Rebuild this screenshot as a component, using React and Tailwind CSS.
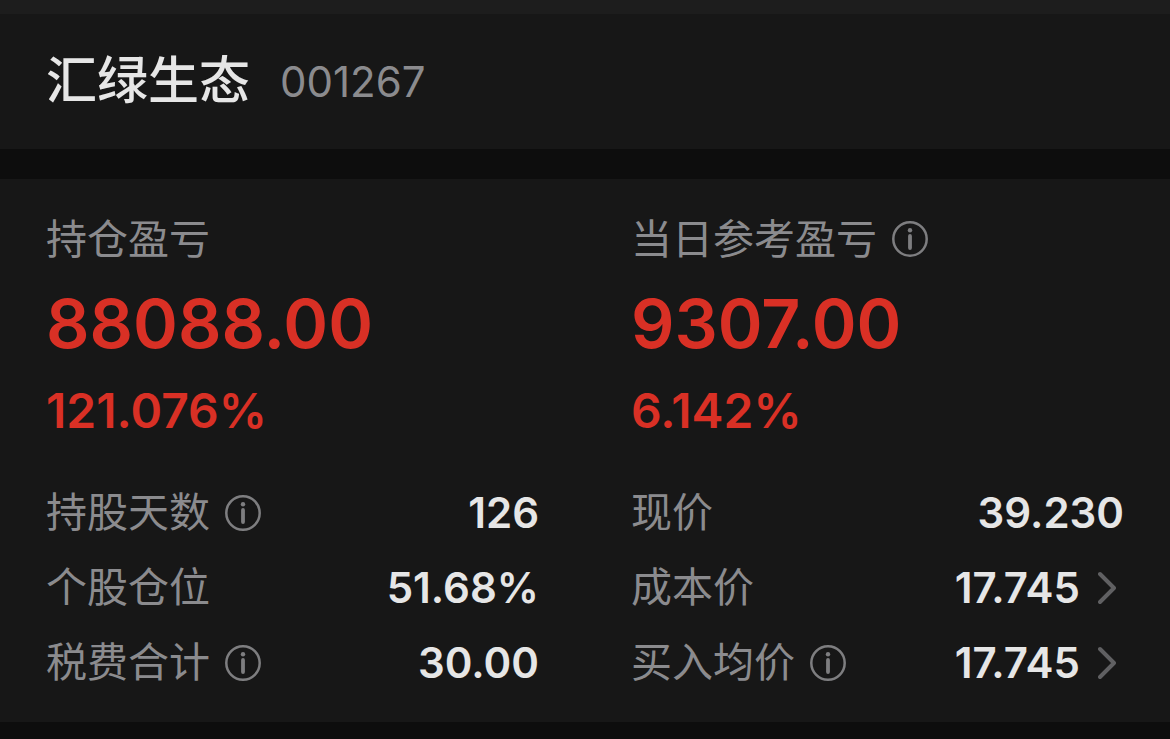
function InfoIcon() {
  return (
    <svg viewBox="0 0 36 36" className="size-9 shrink-0" fill="none" stroke="currentColor" aria-hidden="true">
      <circle cx="18" cy="18" r="16.7" strokeWidth="2.5" />
      <circle cx="18" cy="9.2" r="2.2" fill="currentColor" stroke="none" />
      <path d="M18 15V27" strokeWidth="3.8" strokeLinecap="round" />
    </svg>
  );
}

function Label({ text, info }) {
  return (
    <div className="flex items-center gap-[15px] whitespace-nowrap text-[#8b8b8e]">
      <span>{text}</span>
      {info && (
        <button type="button" aria-label={text + "说明"} className="text-[#7e7e80]">
          <InfoIcon />
        </button>
      )}
    </div>
  );
}

function Summary({ label, info, amount, percent }) {
  return (
    <div className="text-[#d93025]">
      <div className="text-[41px] leading-[60px]">
        <Label text={label} info={info} />
      </div>
      <div className="mt-4 text-[68px] leading-[76px] font-semibold">{amount}</div>
      <div className="mt-5 text-[48px] leading-[60px] font-semibold">{percent}</div>
    </div>
  );
}

function Row({ label, info, value, link }) {
  return (
    <div className="flex h-[75px] items-center justify-between text-[41px]">
      <Label text={label} info={info} />
      <div className="flex items-center gap-[18px] text-[42px] font-semibold text-[#e6e6e6]">
        <span>{value}</span>
        {link && (
          <button type="button" aria-label={label + "详情"} className="pr-2 text-[#606062]">
            <svg viewBox="0 0 18 34" className="h-[34px] w-[18px]" fill="none" stroke="currentColor" strokeWidth="4" strokeLinecap="round" strokeLinejoin="round" aria-hidden="true">
              <path d="M2 3L16 17L2 31" />
            </svg>
          </button>
        )}
      </div>
    </div>
  );
}

export default function App() {
  return (
    <main className="min-h-screen bg-[#0d0d0d] font-['Inter','Noto_Sans_CJK_SC',sans-serif]">
      <div className="h-3.5 bg-[#1d1d1d]" />
      <header className="flex h-[135px] items-center gap-[30px] bg-[#171717] px-[46px]">
        <h1 className="text-[51px] font-medium text-[#e6e6e6]">汇绿生态</h1>
        <span className="text-[42px] text-[#8b8b8e]">001267</span>
      </header>
      <section className="mt-[30px] grid grid-cols-2 gap-x-[92px] bg-[#171717] px-[46px] pt-[30px] pb-[22px]">
        <Summary label="持仓盈亏" amount="88088.00" percent="121.076%" />
        <Summary label="当日参考盈亏" info amount="9307.00" percent="6.142%" />
        <div className="mt-[34px]">
          <Row label="持股天数" info value="126" />
          <Row label="个股仓位" value="51.68%" />
          <Row label="税费合计" info value="30.00" />
        </div>
        <div className="mt-[34px]">
          <Row label="现价" value="39.230" />
          <Row label="成本价" value="17.745" link />
          <Row label="买入均价" info value="17.745" link />
        </div>
      </section>
    </main>
  );
}
